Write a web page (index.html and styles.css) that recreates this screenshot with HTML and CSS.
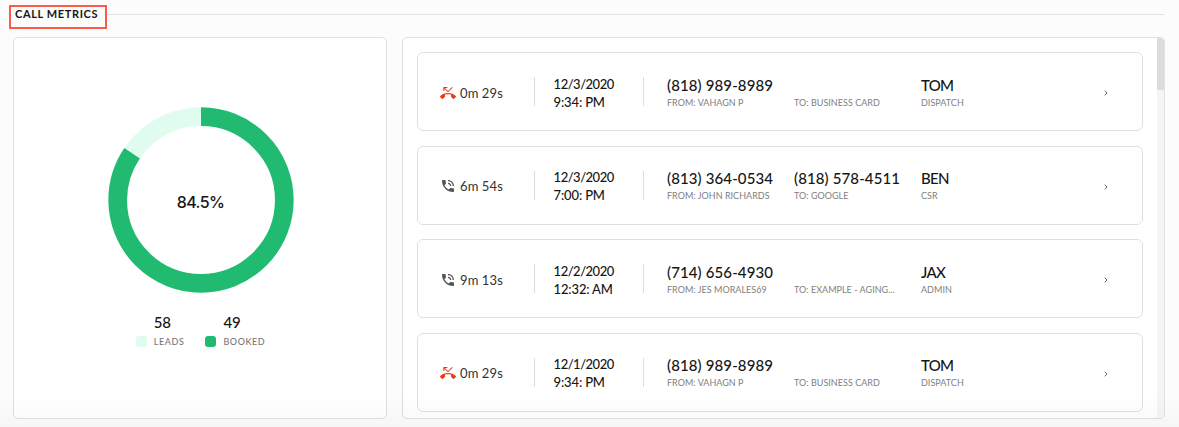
FILE: index.html
```html
<!DOCTYPE html>
<html lang="en">
<head>
<meta charset="utf-8">
<title>Call Metrics</title>
<link rel="stylesheet" href="styles.css">
</head>
<body>
<svg class="defs" width="0" height="0">
  <symbol id="missed" viewBox="0 0 24 24"><path d="M6.5 5.5L12 11l7-7-1-1-6 6-4.5-4.5H11V3H5v6h1.5V5.5zm17.21 11.17C20.66 13.78 16.54 12 12 12 7.46 12 3.34 13.78.29 16.67c-.18.18-.29.43-.29.71s.11.53.29.71l2.48 2.48c.18.18.43.29.71.29.27 0 .52-.11.7-.28.79-.74 1.69-1.36 2.66-1.85.33-.16.56-.5.56-.9v-3.1C8.85 14.25 10.4 14 12 14s3.15.25 4.6.73v3.1c0 .4.23.74.56.9.98.49 1.87 1.12 2.67 1.85.18.17.43.28.7.28.28 0 .53-.11.71-.29l2.48-2.48c.18-.18.29-.43.29-.71s-.12-.52-.3-.7z"/></symbol>
  <symbol id="talk" viewBox="0 0 24 24"><path d="M20 15.5c-1.25 0-2.45-.2-3.57-.57-.35-.11-.74-.03-1.02.24l-2.2 2.2c-2.83-1.44-5.15-3.75-6.59-6.59l2.2-2.21c.28-.26.36-.65.25-1C8.7 6.45 8.5 5.25 8.5 4c0-.55-.45-1-1-1H4c-.55 0-1 .45-1 1 0 9.39 7.61 17 17 17 .55 0 1-.45 1-1v-3.5c0-.55-.45-1-1-1zM19 12h2c0-4.97-4.03-9-9-9v2c3.87 0 7 3.13 7 7zm-4 0h2c0-2.76-2.24-5-5-5v2c1.66 0 3 1.34 3 3z"/></symbol>
  <symbol id="chevron" viewBox="0 0 4 6"><path d="M.7.7L3 3 .7 5.3" fill="none" stroke="#666" stroke-width="1"/></symbol>
</svg>
<header class="heading"><h1 class="title">CALL METRICS</h1><div class="rule"></div></header>
<main class="panels">
  <section class="panel summary">
    <div class="donut">
      <svg width="187" height="186" viewBox="0 0 187 186">
        <circle class="ring-light" cx="94" cy="93" r="83.3"/>
        <circle class="ring-dark" cx="94" cy="93" r="83.3" pathLength="100" stroke-dasharray="84.5 100" transform="rotate(-90 94 93)"/>
      </svg>
      <span class="percent">84.5%</span>
    </div>
    <div class="legend">
      <div class="stat"><b class="count">58</b><i class="swatch light"></i><span class="name">LEADS</span></div>
      <div class="stat"><b class="count">49</b><i class="swatch dark"></i><span class="name">BOOKED</span></div>
    </div>
  </section>
  <section class="panel calls">
    <div class="list">
      <article class="call">
        <div class="duration"><svg class="icon red"><use href="#missed"/></svg><span>0m 29s</span></div>
        <div class="when"><span class="date">12/3/2020</span><span>9:34: PM</span></div>
        <div class="party"><span class="main">(818) 989-8989</span><span class="sub">FROM: VAHAGN P</span></div>
        <div class="party"><span class="main"></span><span class="sub">TO: BUSINESS CARD</span></div>
        <div class="party"><span class="main agent">TOM</span><span class="sub">DISPATCH</span></div>
        <svg class="chevron"><use href="#chevron"/></svg>
      </article>
      <article class="call">
        <div class="duration"><svg class="icon"><use href="#talk"/></svg><span>6m 54s</span></div>
        <div class="when"><span class="date">12/3/2020</span><span>7:00: PM</span></div>
        <div class="party"><span class="main">(813) 364-0534</span><span class="sub">FROM: JOHN RICHARDS</span></div>
        <div class="party"><span class="main">(818) 578-4511</span><span class="sub">TO: GOOGLE</span></div>
        <div class="party"><span class="main agent">BEN</span><span class="sub">CSR</span></div>
        <svg class="chevron"><use href="#chevron"/></svg>
      </article>
      <article class="call">
        <div class="duration"><svg class="icon"><use href="#talk"/></svg><span>9m 13s</span></div>
        <div class="when"><span class="date">12/2/2020</span><span>12:32: AM</span></div>
        <div class="party"><span class="main">(714) 656-4930</span><span class="sub">FROM: JES MORALES69</span></div>
        <div class="party"><span class="main"></span><span class="sub">TO: EXAMPLE - AGING...</span></div>
        <div class="party"><span class="main agent">JAX</span><span class="sub">ADMIN</span></div>
        <svg class="chevron"><use href="#chevron"/></svg>
      </article>
      <article class="call">
        <div class="duration"><svg class="icon red"><use href="#missed"/></svg><span>0m 29s</span></div>
        <div class="when"><span class="date">12/1/2020</span><span>9:34: PM</span></div>
        <div class="party"><span class="main">(818) 989-8989</span><span class="sub">FROM: VAHAGN P</span></div>
        <div class="party"><span class="main"></span><span class="sub">TO: BUSINESS CARD</span></div>
        <div class="party"><span class="main agent">TOM</span><span class="sub">DISPATCH</span></div>
        <svg class="chevron"><use href="#chevron"/></svg>
      </article>
    </div>
    <div class="track"><div class="thumb"></div></div>
  </section>
</main>
<div class="fade"></div>
</body>
</html>
```
FILE: styles.css
```css
* { box-sizing: border-box; }
body { margin: 0; height: 427px; overflow: hidden; background: #fcfcfc; color: #161616; font-family: Lato, "Open Sans", sans-serif; }
.defs { position: absolute; }
.heading { display: flex; height: 37px; padding: 5px 14px 0 9px; }
.title { width: 98px; height: 24px; margin: 0; padding: 0 0 0 4px; border: 2px solid #fb5a48; font-size: 11px; line-height: 14px; font-weight: 700; letter-spacing: .62px; white-space: nowrap; }
.rule { flex: 1; height: 1px; margin-top: 9px; background: #e3e3e3; }
.panels { display: flex; gap: 15px; padding: 0 14px 0 13px; height: 382px; }
.panel { background: #fff; border: 1px solid #e0e0e0; border-radius: 5px; }
.summary { width: 374px; display: flex; flex-direction: column; align-items: center; padding-top: 69px; }
.donut { display: grid; place-items: center; width: 187px; height: 186px; }
.donut > * { grid-area: 1 / 1; }
.ring-light, .ring-dark { fill: none; stroke-width: 18.7; }
.ring-light { stroke: #e0fcee; }
.ring-dark { stroke: #20bb70; }
.percent { font: 500 16px/20px Inter, sans-serif; letter-spacing: -.6px; padding: 3px 0 0 1px; }
.legend { display: flex; gap: 21px; margin-top: 19px; padding-left: 1px; }
.stat { display: grid; grid-template-columns: 11px auto; column-gap: 7px; align-items: center; }
.count { grid-column: 2; font-size: 15px; line-height: 21px; font-weight: 500; }
.swatch { width: 11px; height: 11px; border-radius: 3px; }
.light { background: #e0fcee; }
.dark { background: #20bb70; }
.name { font-size: 9px; line-height: 17px; font-weight: 500; color: #777; letter-spacing: .6px; }
.calls { flex: 1; display: flex; justify-content: space-between; overflow: hidden; }
.list { width: 740px; padding: 14px 0 0 14px; display: flex; flex-direction: column; gap: 14.3px; }
.call { width: 726px; height: 79.3px; flex: none; display: grid; grid-template-columns: 117px 109px 23px 127px 127px 127px 1fr; align-items: center; border: 1px solid #e0e0e0; border-radius: 6px; }
.duration { display: flex; align-items: center; height: 29px; gap: 4px; padding: 2px 0 0 22px; border-right: 1px solid #ddd; font-size: 13px; letter-spacing: .1px; color: #333; }
.icon { width: 16px; height: 16px; fill: #555; }
.red { fill: #ef3a1a; }
.when { display: flex; flex-direction: column; justify-content: center; height: 29px; padding: 2px 0 0 18.6px; border-right: 1px solid #ddd; font-size: 13px; line-height: 18px; font-weight: 500; letter-spacing: -.15px; }
.date { letter-spacing: -.5px; }
.when + .party { grid-column: 4; }
.party { display: flex; flex-direction: column; padding-top: 2px; white-space: nowrap; }
.main { height: 20px; font-size: 15px; line-height: 19px; font-weight: 500; letter-spacing: .12px; }
.agent { letter-spacing: -.7px; }
.sub { font-size: 9px; line-height: 14px; color: #808080; letter-spacing: .03px; }
.chevron { width: 4px; height: 6px; margin: 3px 0 0 56px; }
.track { width: 7px; background: #f5f5f5; }
.thumb { height: 52px; background: #dcdcdc; }
.fade { position: fixed; left: 0; right: 0; bottom: 0; height: 35px; background: linear-gradient(rgba(0,0,0,0), rgba(0,0,0,.025)); pointer-events: none; }
```
